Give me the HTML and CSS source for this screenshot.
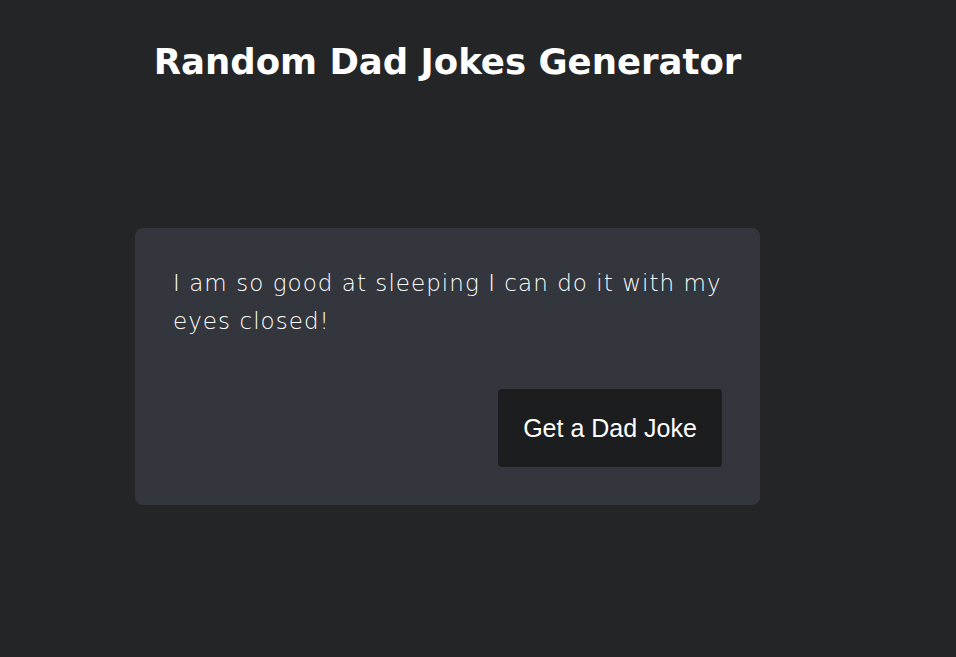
FILE: index.html
```html
<!DOCTYPE html>
<html lang="en">
<head>
<meta charset="utf-8">
<title>Random Dad Jokes Generator</title>
<link rel="stylesheet" href="styles.css">
</head>
<body>
<main class="container">
  <h1 class="title">Random Dad Jokes Generator</h1>
  <section class="card">
    <p class="joke">I am so good at sleeping I can do it with my eyes closed!</p>
    <div class="actions">
      <button class="btn" type="button">Get a Dad Joke</button>
    </div>
  </section>
</main>
</body>
</html>
```
FILE: styles.css
```css
html, body {
  margin: 0;
  padding: 0;
  background: #242527;
  height: 100%;
}
body {
  font-family: "DejaVu Sans", sans-serif;
  color: #ffffff;
}
.container {
  width: 625px;
  margin-left: 135px;
  padding-top: 40px;
}
.title {
  margin: 0;
  text-align: center;
  font-family: "DejaVu Sans", sans-serif;
  font-weight: 700;
  font-size: 35.5px;
  line-height: 44px;
}
.card {
  margin-top: 144px;
  background: #33363c;
  border-radius: 8px;
  padding: 36px 38px 38px 38px;
}
.joke {
  margin: 0;
  font-family: "DejaVu Sans", sans-serif;
  font-weight: 200;
  font-size: 23px;
  letter-spacing: 1.05px;
  line-height: 38px;
}
.actions {
  display: flex;
  justify-content: flex-end;
  margin-top: 49px;
}
.btn {
  font-family: "Liberation Sans", Arial, sans-serif;
  font-size: 25px;
  color: #ffffff;
  background: #1b1d1f;
  border: none;
  border-radius: 4px;
  width: 224px;
  height: 78px;
  padding: 0;
}
```
